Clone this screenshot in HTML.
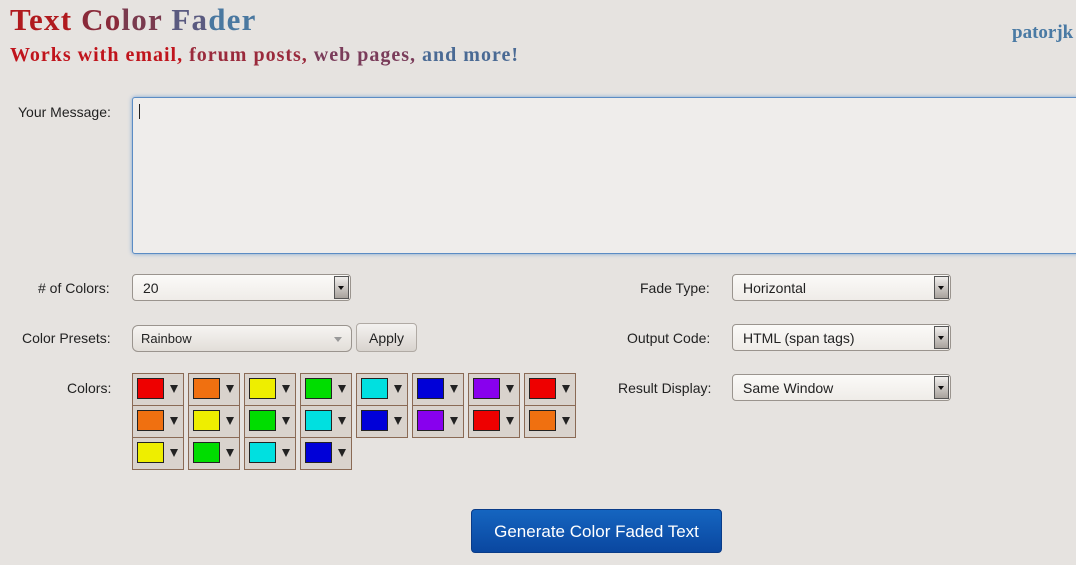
<!DOCTYPE html>
<html><head><style>
body{margin:0;width:1076px;height:565px;overflow:hidden;background:#e6e3e0;font-family:"Liberation Sans",sans-serif;position:relative}
.a{position:absolute}
.lbl{position:absolute;font-size:14px;color:#222;text-align:right}
.sel{position:absolute;height:27px;border:1px solid #9a948e;border-radius:4px;background:linear-gradient(#fbfaf8,#efece8);box-sizing:border-box;font-size:14px;color:#222;padding:5px 10px}
.sel .btn{position:absolute;right:1px;top:1px;width:15px;height:23px;background:linear-gradient(#f0eeec,#a8a29c);border:1px solid #555;box-sizing:border-box}
.sel .btn:after{content:"";position:absolute;left:3px;top:9px;border:3px solid transparent;border-top:4px solid #111}
.sw{position:absolute;width:52px;height:33px;border:1px solid #8a6a55;box-sizing:border-box;background:#d9d3cd}
.sw i{position:absolute;left:4px;top:4px;width:27px;height:21px;border:1px solid #222;box-sizing:border-box}
.sw b{position:absolute;left:37px;top:11px;border:4px solid transparent;border-top:8px solid #222;border-bottom:0}
</style></head><body>
<div class="a" style="left:10px;top:2px;font:bold 31px 'Liberation Serif',serif;letter-spacing:1.2px"><span style="color:#b01a1e">Text </span><span style="color:#8a2a3a">Co</span><span style="color:#7a3a4e">lor </span><span style="color:#5a5a80">Fa</span><span style="color:#4a78a0">der</span></div>
<div class="a" style="left:10px;top:44px;font:bold 20px 'Liberation Serif',serif;letter-spacing:1px"><span style="color:#c0141c">Works with email, </span><span style="color:#9a2a3c">forum posts, </span><span style="color:#7a3c5a">web pages, </span><span style="color:#4a6a94">and more!</span></div>
<div class="a" style="left:1012px;top:22px;font:bold 19px 'Liberation Serif',serif;color:#4a7aa4">patorjk</div>

<div class="lbl" style="left:18px;top:104px">Your Message:</div>
<div class="a" style="left:132px;top:97px;width:960px;height:155px;border:1px solid #5b8cc4;box-shadow:0 0 4px #7aa4d4;background:#efedeb;border-radius:3px"></div>
<div class="a" style="left:139px;top:104px;width:1px;height:15px;background:#222"></div>

<div class="lbl" style="left:38px;top:280px">#&nbsp;of Colors:</div>
<div class="sel" style="left:132px;top:274px;width:219px">20<span class="btn"></span></div>
<div class="lbl" style="left:22px;top:330px">Color Presets:</div>
<div class="sel" style="left:132px;top:325px;width:220px;border-radius:6px;font-size:13px;padding:5px 8px;background:linear-gradient(#f6f4f2,#e2ded9)">Rainbow<span class="a" style="right:9px;top:11px;border:4px solid transparent;border-top:5px solid #999"></span></div>
<div class="a" style="left:356px;top:323px;width:61px;height:29px;border:1px solid #b0aaa4;border-radius:4px;background:linear-gradient(#f4f2f0,#d8d3ce);box-sizing:border-box;font-size:14px;text-align:center;line-height:29px;color:#222">Apply</div>
<div class="lbl" style="left:67px;top:380px">Colors:</div>

<div class="lbl" style="left:640px;top:280px">Fade Type:</div>
<div class="sel" style="left:732px;top:274px;width:219px">Horizontal<span class="btn"></span></div>
<div class="lbl" style="left:627px;top:330px">Output Code:</div>
<div class="sel" style="left:732px;top:324px;width:219px">HTML (span tags)<span class="btn"></span></div>
<div class="lbl" style="left:618px;top:380px">Result Display:</div>
<div class="sel" style="left:732px;top:374px;width:219px">Same Window<span class="btn"></span></div>

<div id="sw"></div>
<script>
var R="#ee0000",O="#f07010",Y="#eeee00",G="#00dd00",C="#00e0e0",B="#0000d8",P="#8800ee";
var rows=[[R,O,Y,G,C,B,P,R],[O,Y,G,C,B,P,R,O],[Y,G,C,B]],h="";
rows.forEach(function(r,j){r.forEach(function(c,i){h+='<div class="sw" style="left:'+(132+56*i)+'px;top:'+(373+32*j)+'px"><i style="background:'+c+'"></i><b></b></div>';});});
document.getElementById("sw").innerHTML=h;
</script>

<div class="a" style="left:471px;top:509px;width:251px;height:44px;border-radius:4px;background:linear-gradient(#1565c0,#0a47a0);color:#fff;font-size:17px;text-align:center;line-height:44px;box-sizing:border-box;border:1px solid #0a3c88">Generate Color Faded Text</div>
</body></html>
